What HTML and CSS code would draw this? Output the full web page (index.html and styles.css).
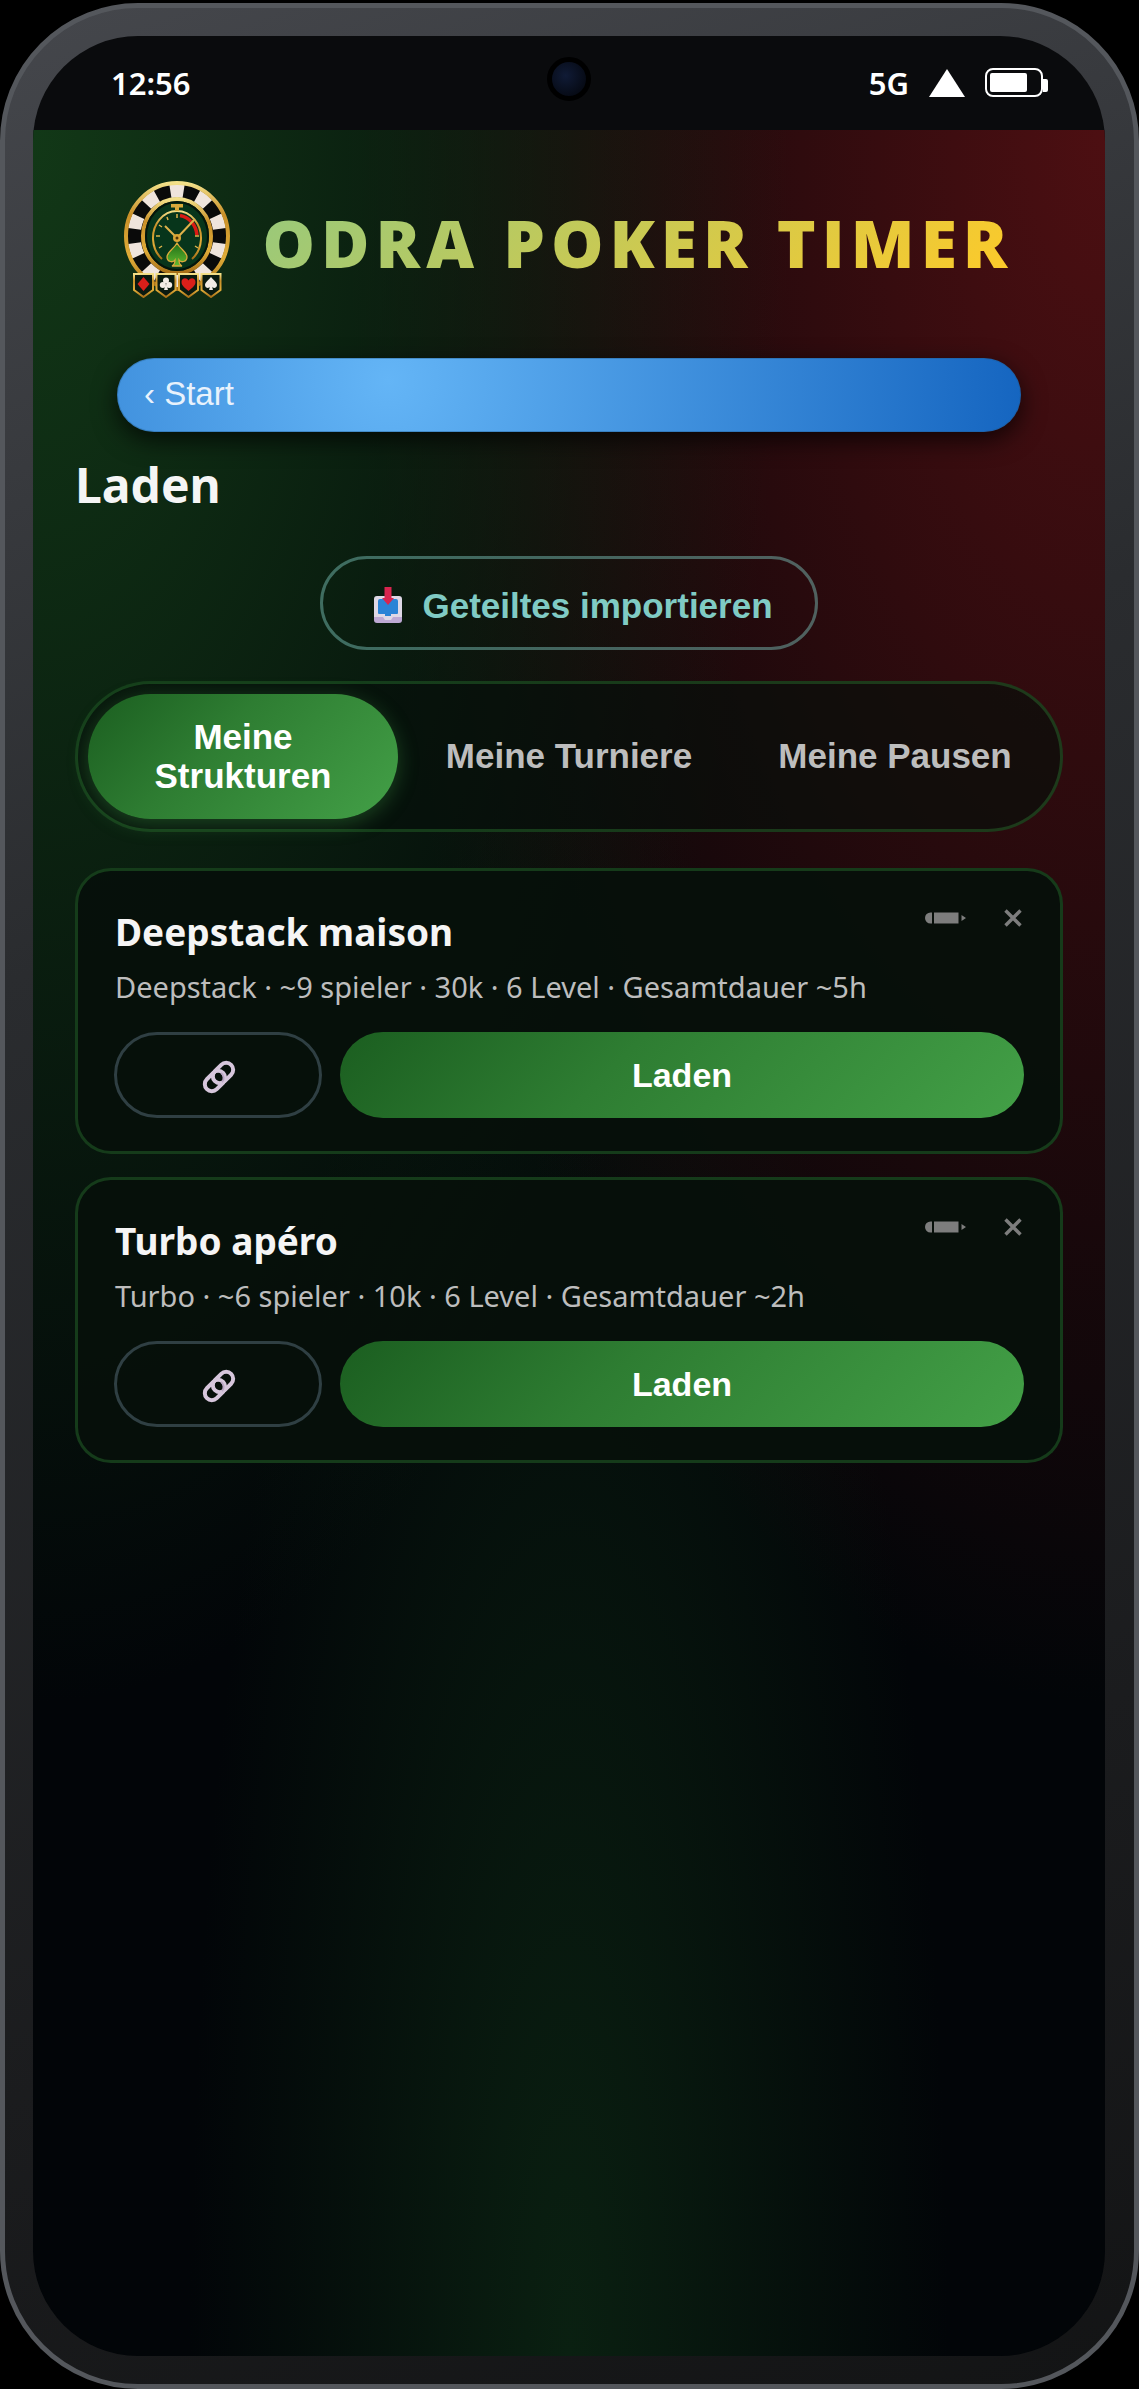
FILE: index.html
```html
<!DOCTYPE html>
<html lang="de">

<head>
    <meta charset="UTF-8">
    <meta name="viewport" content="width=device-width, initial-scale=1.0">
    <title>Odra Poker Timer - Laden</title>
    <link rel="stylesheet" href="styles.css">
</head>

<body>

    <!-- icons used more than once -->
    <svg class="sprite" aria-hidden="true">
        <symbol id="icon-link" viewBox="0 0 34 34">
            <g fill="none" stroke="#d6c6dc" stroke-width="4">
                <rect x="-11.500" y="-7" width="23" height="14" rx="7" transform="translate(21 13) rotate(-45)" />
                <rect x="-11.500" y="-7" width="23" height="14" rx="7" transform="translate(13 21) rotate(-45)" />
            </g>
            <path d="M19 13a6 6 0 0 1 1 9" fill="none" stroke="#b9a6c4" stroke-width="2" />
        </symbol>
        <symbol id="icon-pencil" viewBox="0 0 41 12">
            <path d="M7 0.500v11H5.500a5.500 5.500 0 0 1 0-11zM9 0.500h24.500v11H9zM36.500 3l4.500 3-4.500 3z" fill="currentColor" />
        </symbol>
        <symbol id="icon-close" viewBox="0 0 18 18">
            <path d="M1.500 1.500l15 15M16.500 1.500l-15 15" fill="none" stroke="currentColor" stroke-width="3.400" />
        </symbol>
    </svg>

    <div class="phone">
        <div class="screen">

            <div class="statusbar">
                <span class="time">12:56</span>
                <span class="camera"></span>
                <div class="signal">
                    <span>5G</span>
                    <svg width="36" height="28" viewBox="0 0 36 28"><path d="M18 0l18 28H0z" fill="#fff" /></svg>
                    <svg class="battery" width="63" height="30" viewBox="0 0 63 30">
                        <rect x="1" y="1" width="56" height="27" rx="7" fill="none" stroke="#fff" stroke-width="2" />
                        <rect x="5" y="5" width="37" height="19" rx="2" fill="#fff" />
                        <path d="M58 11h3a2 2 0 0 1 2 2v9a2 2 0 0 1-2 2h-3z" fill="#fff" />
                    </svg>
                </div>
            </div>

            <main>
                <header>
                    <svg class="logo" width="106" height="117" viewBox="0 0 106 117">
                        <defs>
                            <linearGradient id="gold" x1="0" y1="0" x2="0" y2="1">
                                <stop offset="0" stop-color="#f3e089" />
                                <stop offset="0.300" stop-color="#c98f28" />
                                <stop offset="0.700" stop-color="#e0ac38" />
                                <stop offset="1" stop-color="#a66e17" />
                            </linearGradient>
                            <linearGradient id="leaf" x1="0" y1="0" x2="0" y2="1">
                                <stop offset="0" stop-color="#1f6d18" />
                                <stop offset="1" stop-color="#62ba2f" />
                            </linearGradient>
                        </defs>
                        <!-- poker chip -->
                        <ellipse cx="53" cy="55" rx="51" ry="53" fill="#0a0a0a" />
                        <ellipse cx="53" cy="55" rx="43" ry="45" fill="none" stroke="#efe4dc" stroke-width="13" pathLength="20" stroke-dasharray="0.960 1.040" stroke-dashoffset="-0.520" />
                        <ellipse cx="53" cy="55" rx="51" ry="53" fill="none" stroke="url(#gold)" stroke-width="4" />
                        <ellipse cx="53" cy="55" rx="34" ry="37" fill="#07351b" stroke="url(#gold)" stroke-width="4" />
                        <ellipse cx="53" cy="55" rx="31" ry="34" fill="none" stroke="#04150b" stroke-width="2" />
                        <!-- stopwatch -->
                        <path d="M38 78a24 27 0 1 1 30 0" fill="none" stroke="url(#gold)" stroke-width="2" />
                        <path d="M47 23h12v3.500H47zM51 26h4v4h-4z" fill="#d9a93b" />
                        <path d="M56 34.500a20 22 0 0 1 17 20" fill="none" stroke="#d91a14" stroke-width="3.500" />
                        <path d="M53 33v4M43 36l1 3M35 44l3 2M32 55h4M35 67l3-2M71 65l3 2M71 55h4" stroke="#d9b14a" stroke-width="1.500" />
                        <path d="M41 45l12 12 17-18" fill="none" stroke="#dcb14a" stroke-width="2" />
                        <circle cx="53" cy="57" r="4" fill="#d9a535" />
                        <circle cx="53" cy="57" r="1.500" fill="#4d3306" />
                        <path d="M53 62c3 6 10 9 10 14 0 5-6 6-8 3 0 3 1 5 3 6H48c2-1 3-3 3-6-2 3-8 2-8-3 0-5 7-8 10-14z" fill="url(#leaf)" stroke="#d9a93b" stroke-width="1.300" />
                        <!-- card suits -->
                        <g fill="#0a1a10" stroke="url(#gold)" stroke-width="2">
                            <path d="M10 93h19v16l-9.500 7-9.500-7z" />
                            <path d="M32.500 93h19v16l-9.500 7-9.500-7z" />
                            <path d="M55 93h19v16l-9.500 7-9.500-7z" />
                            <path d="M77.500 93h19v16l-9.500 7-9.500-7z" />
                        </g>
                        <path d="M19.500 96l6 7-6 7-6-7z" fill="#d91f1a" />
                        <g fill="#f3ece6">
                            <circle cx="42" cy="99.500" r="3" />
                            <circle cx="38.800" cy="104" r="3" />
                            <circle cx="45.200" cy="104" r="3" />
                            <path d="M42 102l2 7h-4z" />
                            <path d="M87 96c2 3 6 5 6 8 0 3-4 4-5 1.500l1 3.500h-4l1-3.500c-1 2.500-5 1.500-5-1.500 0-3 4-5 6-8z" />
                        </g>
                        <path d="M64.500 110c-3-3-7-5-7-9 0-4 5-5 7-1.500 2-3.500 7-2.500 7 1.500 0 4-4 6-7 9z" fill="#d91f1a" />
                    </svg>
                    <span class="brand">ODRA POKER TIMER</span>
                </header>

                <button type="button" class="back-button">‹ Start</button>

                <h1>Laden</h1>

                <button type="button" class="import-button">
                    <svg width="28" height="36" viewBox="0 0 28 36">
                        <rect x="0" y="26" width="28" height="10" rx="3" fill="#bda9d4" />
                        <path d="M3 9h22a3 3 0 0 1 3 3v18H19l-2 3h-6l-2-3H0V12a3 3 0 0 1 3-3z" fill="#ded8e6" />
                        <path d="M6 12h16a2 2 0 0 1 2 2v12a1 1 0 0 1-1 1h-6v2h-6v-2H5a1 1 0 0 1-1-1V14a2 2 0 0 1 2-2z" fill="#2a83d6" />
                        <path d="M10.500 0h7v11h2.500l-6 7-6-7h2.500z" fill="#d8254f" />
                    </svg>
                    Geteiltes importieren
                </button>

                <nav class="tabs">
                    <button type="button" class="tab active">Meine Strukturen</button>
                    <button type="button" class="tab">Meine Turniere</button>
                    <button type="button" class="tab">Meine Pausen</button>
                </nav>

                <section class="card">
                    <div class="card-head">
                        <h2>Deepstack maison</h2>
                        <div class="card-tools">
                            <button type="button" aria-label="Bearbeiten"><svg width="41" height="12"><use href="#icon-pencil" /></svg></button>
                            <button type="button" aria-label="Löschen"><svg width="18" height="18"><use href="#icon-close" /></svg></button>
                        </div>
                    </div>
                    <p>Deepstack · ~9 spieler · 30k · 6 Level · Gesamtdauer ~5h</p>
                    <div class="card-buttons">
                        <button type="button" class="share-button" aria-label="Teilen"><svg width="34" height="34"><use href="#icon-link" /></svg></button>
                        <button type="button" class="load-button">Laden</button>
                    </div>
                </section>

                <section class="card">
                    <div class="card-head">
                        <h2>Turbo apéro</h2>
                        <div class="card-tools">
                            <button type="button" aria-label="Bearbeiten"><svg width="41" height="12"><use href="#icon-pencil" /></svg></button>
                            <button type="button" aria-label="Löschen"><svg width="18" height="18"><use href="#icon-close" /></svg></button>
                        </div>
                    </div>
                    <p>Turbo · ~6 spieler · 10k · 6 Level · Gesamtdauer ~2h</p>
                    <div class="card-buttons">
                        <button type="button" class="share-button" aria-label="Teilen"><svg width="34" height="34"><use href="#icon-link" /></svg></button>
                        <button type="button" class="load-button">Laden</button>
                    </div>
                </section>
            </main>

        </div>
    </div>

</body>

</html>
```

FILE: styles.css
```css
* {
    box-sizing: border-box;
    margin: 0;
    padding: 0;
}

body {
    font-family: 'Segoe UI', 'Noto Sans', 'Open Sans', sans-serif;
    background-color: #000;
    color: #f5f5f5;
    min-height: 100vh;
    display: flex;
    padding-top: 3px;
}

button {
    font-family: Arial, 'Liberation Sans', sans-serif;
    font-size: 35px;
    font-weight: bold;
    line-height: 39px;
    border: none;
    background: none;
    cursor: pointer;
}

svg {
    display: block;
    flex-shrink: 0;
}

.sprite {
    position: absolute;
    width: 0;
    height: 0;
}

/* phone */
.phone {
    flex: 1;
    display: flex;
    padding: 28px 29px 28px 28px;
    border: 5px solid #54575c;
    border-radius: 138px;
    background: linear-gradient(160deg, #45474c 0%, #2a2c2f 35%, #1b1c1e 75%, #131415 100%);
    background-origin: border-box;
}

.screen {
    flex: 1;
    display: flex;
    flex-direction: column;
    border-radius: 105px;
    overflow: hidden;
}

.statusbar {
    position: relative;
    display: flex;
    justify-content: space-between;
    align-items: center;
    height: 94px;
    padding: 0 57px 0 78px;
    background-color: #0a0b0d;
    color: #fff;
    font-size: 31px;
    font-weight: 600;
}

.camera {
    position: absolute;
    top: 21px;
    left: 50%;
    width: 44px;
    height: 44px;
    margin-left: -22px;
    border: 5px solid #000;
    border-radius: 50%;
    background: radial-gradient(circle at 40% 40%, #101b36, #060a14 75%);
}

.signal {
    display: flex;
    align-items: center;
    gap: 20px;
}

/* app */
main {
    flex: 1;
    display: flex;
    flex-direction: column;
    padding: 51px 42px 60px;
    background:
        radial-gradient(ellipse at 0% 0%, #123817, transparent 50%),
        radial-gradient(ellipse at 100% 0%, #4d0f12, transparent 50%),
        radial-gradient(ellipse at 50% 100%, #0a2011, transparent 50%),
        #020508;
}

header {
    display: flex;
    align-items: center;
    justify-content: center;
    gap: 32px;
    margin-bottom: 60px;
}

.brand {
    padding-top: 4px;
    font-family: 'Segoe UI Black', 'Open Sans', sans-serif;
    font-size: 66px;
    font-weight: 800;
    line-height: 84px;
    letter-spacing: 6px;
    white-space: nowrap;
    background: linear-gradient(135deg, #97c97c, #ffca28);
    -webkit-background-clip: text;
    background-clip: text;
    color: transparent;
}

.back-button {
    margin: 0 42px;
    height: 74px;
    padding: 0 26px 4px;
    border: 1px solid rgba(33, 90, 140, 0.4);
    border-radius: 37px;
    background: radial-gradient(circle at 30% 30%, #64b5f6, #1565c0);
    background-origin: border-box;
    box-shadow: 0 8px 24px rgba(0, 0, 0, 0.7);
    color: #e8f2fc;
    font-size: 33px;
    font-weight: normal;
    text-align: left;
}

h1 {
    margin: 23px 0 41px;
    font-size: 48px;
    line-height: 60px;
}

.import-button {
    display: flex;
    align-items: center;
    align-self: center;
    gap: 20px;
    height: 94px;
    padding: 4px 42px 0 51px;
    border: 3px solid rgba(128, 203, 196, 0.45);
    border-radius: 47px;
    color: #80cbc4;
}

.tabs {
    display: flex;
    gap: 16px;
    margin: 31px 0 36px;
    padding: 10px;
    border: 3px solid rgba(46, 125, 50, 0.4);
    border-radius: 76px;
    background-color: rgba(6, 16, 10, 0.65);
}

.tab {
    flex: 1;
    height: 125px;
    padding: 0 16px 2px;
    border-radius: 63px;
    color: #bdbdbd;
}

.active {
    background: linear-gradient(135deg, #1b5e20, #2e7d32 40%, #43a047);
    box-shadow: 0 5px 20px rgba(67, 160, 71, 0.35);
    color: #fff;
}

/* saved structures */
.card {
    margin-bottom: 23px;
    padding: 36px 36px 33px;
    border: 3px solid rgba(46, 125, 50, 0.4);
    border-radius: 36px;
    background-color: rgba(6, 16, 11, 0.94);
}

.card-head {
    display: flex;
    justify-content: space-between;
    align-items: flex-start;
    padding: 0 1px;
}

.card h2 {
    font-size: 37px;
    line-height: 50px;
}

.card p {
    margin: 10px 1px 25px;
    color: #bdbdbd;
    font-size: 29px;
    line-height: 40px;
}

.card-tools {
    display: flex;
    align-items: center;
    gap: 38px;
    height: 22px;
    padding-right: 1px;
}

.card-tools button {
    color: #7d7d7d;
}

.card-buttons {
    display: flex;
    gap: 18px;
}

.share-button,
.load-button {
    display: flex;
    align-items: center;
    justify-content: center;
    height: 86px;
    border-radius: 43px;
}

.share-button {
    width: 208px;
    padding: 4px 0 0 2px;
    border: 3px solid #2f3f43;
}

.load-button {
    flex: 1;
    background: linear-gradient(135deg, #1b5e20, #2e7d32 40%, #43a047);
    color: #fff;
    font-size: 34px;
}
```
